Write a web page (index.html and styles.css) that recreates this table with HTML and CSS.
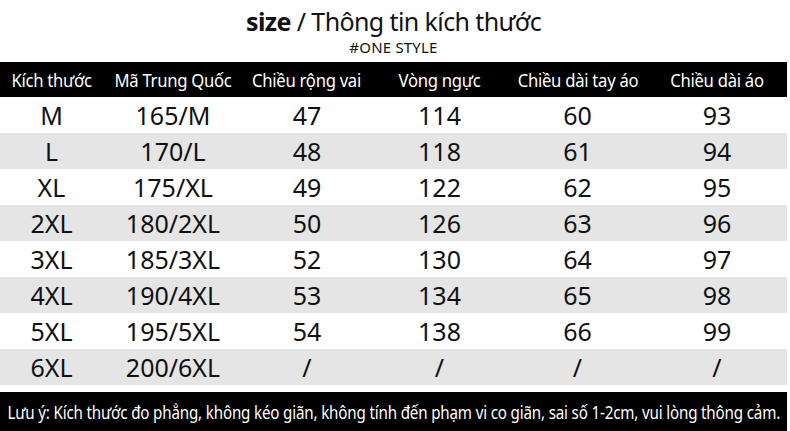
FILE: index.html
```html
<!DOCTYPE html>
<html lang="vi">
<head>
<meta charset="utf-8">
<link rel="stylesheet" href="styles.css">
</head>
<body>
<div class="page">
  <header class="title">
    <h1><b>size</b> / Thông tin kích thước</h1>
    <p class="sub">#ONE STYLE</p>
  </header>
  <table class="sizes">
    <thead>
      <tr><th><span>Kích thước</span></th><th><span>Mã Trung Quốc</span></th><th><span>Chiều rộng vai</span></th><th><span>Vòng ngực</span></th><th><span>Chiều dài tay áo</span></th><th><span>Chiều dài áo</span></th></tr>
    </thead>
    <tbody>
      <tr><td>M</td><td>165/M</td><td>47</td><td>114</td><td>60</td><td>93</td></tr>
      <tr><td>L</td><td>170/L</td><td>48</td><td>118</td><td>61</td><td>94</td></tr>
      <tr><td>XL</td><td>175/XL</td><td>49</td><td>122</td><td>62</td><td>95</td></tr>
      <tr><td>2XL</td><td>180/2XL</td><td>50</td><td>126</td><td>63</td><td>96</td></tr>
      <tr><td>3XL</td><td>185/3XL</td><td>52</td><td>130</td><td>64</td><td>97</td></tr>
      <tr><td>4XL</td><td>190/4XL</td><td>53</td><td>134</td><td>65</td><td>98</td></tr>
      <tr><td>5XL</td><td>195/5XL</td><td>54</td><td>138</td><td>66</td><td>99</td></tr>
      <tr><td>6XL</td><td>200/6XL</td><td>/</td><td>/</td><td>/</td><td>/</td></tr>
    </tbody>
  </table>
  <footer class="note"><span>Lưu ý: Kích thước đo phẳng, không kéo giãn, không tính đến phạm vi co giãn, sai số 1-2cm, vui lòng thông cảm.</span></footer>
</div>
</body>
</html>
```
FILE: styles.css
```css
html, body { margin: 0; padding: 0; background: #fff; }
body { width: 790px; height: 431px; overflow: hidden; font-family: "Noto Sans", "Open Sans", sans-serif; color: #111; }
.page { width: 787px; display: flex; flex-direction: column; }
.title { text-align: center; height: 62px; display: flex; flex-direction: column; align-items: center; }
.title h1 { margin: 5px 0 0; font-size: 25px; font-weight: 400; line-height: 32px; letter-spacing: -0.6px; }
.title h1 b { font-weight: 700; }
.title .sub { margin: 0; font-size: 15px; line-height: 20px; letter-spacing: 0.2px; }
.sizes { width: 787px; border-collapse: collapse; table-layout: fixed; }
.sizes th:nth-child(1) { width: 103px; }
.sizes th:nth-child(2) { width: 140px; }
.sizes th:nth-child(3) { width: 128px; }
.sizes th:nth-child(4) { width: 137px; }
.sizes th:nth-child(5) { width: 139px; }
.sizes th:nth-child(6) { width: 140px; }
.sizes th { background: #000; color: #fff; font-weight: 400; font-size: 18.5px; height: 35px; padding: 0; white-space: nowrap; }
.sizes th span { display: inline-block; transform: scaleX(0.9); letter-spacing: -0.3px; }
.sizes td { text-align: center; font-size: 25px; height: 36px; padding: 0; line-height: 36px; }
.sizes tbody tr:nth-child(even) td { background: #e5e5e5; }
.note { margin-top: 7px; background: #000; color: #fff; height: 39px; font-size: 18px; display: flex; justify-content: center; align-items: center; white-space: nowrap; overflow: hidden; }
.note span { flex: none; display: block; transform: scaleX(0.842); letter-spacing: -0.2px; }
```
